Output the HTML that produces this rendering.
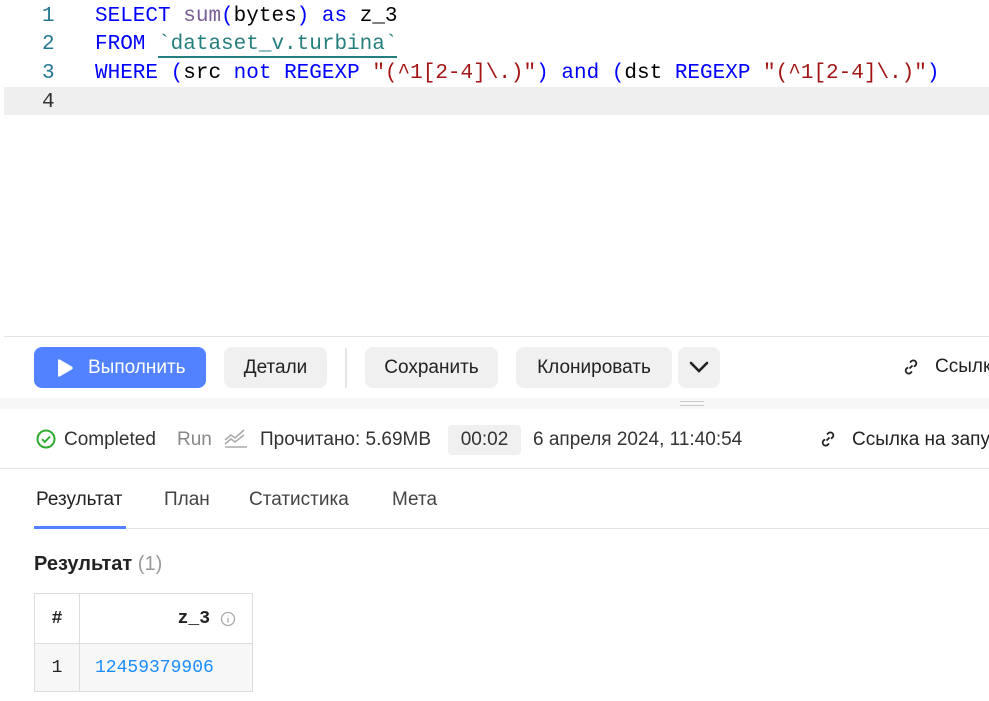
<!DOCTYPE html>
<html><head><meta charset="utf-8"><style>
*{margin:0;padding:0;box-sizing:border-box}
body{width:989px;height:701px;overflow:hidden;background:#fff;font-family:"Liberation Sans",sans-serif;position:relative;color:#222}
.code{position:absolute;left:0;top:0;width:989px;font-family:"Liberation Mono",monospace;font-size:21px}
.ln{position:absolute;height:28px;left:4px;width:985px;line-height:28px}
.ln .n{position:absolute;left:38px;top:2px;color:#237893}
.ln .t{position:absolute;left:91px;top:2px;white-space:pre;color:#000}
.k{color:#0000ff}.f{color:#795e96}.s{color:#a31515}.tb{color:#267f7f;border-bottom:2px solid #267f7f}
.abs{position:absolute;white-space:nowrap}
.btn{position:absolute;top:347px;height:41px;border-radius:8px;background:#f0f0f0;font-size:19px;line-height:41px;text-align:center;color:#222}
.status{position:absolute;top:429px;font-size:19px;line-height:22px;color:#333;white-space:nowrap}
.tab{position:absolute;top:489px;font-size:19px;color:#444}
td{border:1px solid #ddd;font-family:"Liberation Mono",monospace;font-size:18px}
</style></head><body>
<div class="code">
<div class="ln" style="top:1px"><span class="n">1</span><span class="t"><span class="k">SELECT</span> <span class="f">sum</span><span class="k">(</span>bytes<span class="k">)</span> <span class="k">as</span> z_3</span></div>
<div class="ln" style="top:29px"><span class="n">2</span><span class="t"><span class="k">FROM</span> <span class="tb">`dataset_v.turbina`</span></span></div>
<div class="ln" style="top:58px"><span class="n">3</span><span class="t"><span class="k">WHERE</span> <span class="k">(</span>src <span class="k">not</span> <span class="k">REGEXP</span> <span class="s">"(^1[2-4]\.)"</span><span class="k">)</span> <span class="k">and</span> <span class="k">(</span>dst <span class="k">REGEXP</span> <span class="s">"(^1[2-4]\.)"</span><span class="k">)</span></span></div>
<div class="ln" style="top:87px;background:#efefef"><span class="n" style="color:#333">4</span></div>
</div>
<div class="abs" style="left:4px;top:336px;width:985px;height:1px;background:#e5e5e5"></div>
<div class="btn" style="left:34px;width:172px;background:#5282ff;color:#fff"><svg class="abs" style="left:22px;top:11px" width="18" height="20" viewBox="0 0 18 20"><path d="M2 2.5Q2 0.5 4 1.6L16 8.6Q17.5 10 16 11.4L4 18.4Q2 19.5 2 17.5Z" fill="#fff"/></svg><span style="position:absolute;left:54px">Выполнить</span></div>
<div class="btn" style="left:224px;width:103px">Детали</div>
<div class="abs" style="left:345px;top:348px;width:2px;height:40px;background:#e5e5e5"></div>
<div class="btn" style="left:365px;width:133px">Сохранить</div>
<div class="btn" style="left:516px;width:156px">Клонировать</div>
<div class="btn" style="left:678px;width:42px"><svg class="abs" style="left:11px;top:14px" width="20" height="12" viewBox="0 0 20 12"><path d="M2 2L10 10L18 2" stroke="#222" stroke-width="2.6" fill="none" stroke-linecap="round"/></svg></div>
<svg class="abs" style="left:902px;top:358px" width="18" height="18" viewBox="0 0 18 18" fill="none" stroke="#222" stroke-width="1.8"><path d="M7.5 10.5l3-3M8 4.5l1.5-1.5a3 3 0 0 1 4.2 4.2L12 8.7M10 13.5l-1.5 1.5a3 3 0 0 1-4.2-4.2L6 9.3"/></svg>
<div class="abs" style="left:935px;top:356px;font-size:19px">Ссылк</div>
<div class="abs" style="left:0;top:398px;width:989px;height:11px;background:#f7f7f7"></div>
<div class="abs" style="left:680px;top:401px;width:24px;height:1px;background:#ccc"></div>
<div class="abs" style="left:680px;top:405px;width:24px;height:1px;background:#ccc"></div>
<svg class="abs" style="left:36px;top:429px" width="20" height="20" viewBox="0 0 20 20" fill="none" stroke="#30aa30" stroke-width="2"><circle cx="10" cy="10" r="8.5"/><path d="M6 10.2l2.8 2.8L14 7.5"/></svg>
<div class="status" style="left:64px">Completed</div>
<div class="status" style="left:177px;color:#888">Run</div>
<svg class="abs" style="left:224px;top:428px" width="24" height="20" viewBox="0 0 24 20" fill="none" stroke="#aaa" stroke-width="1.6"><path d="M1 12l6-5 4 3 9-8M1 16l6-5 4 3 9-7M1 19h22"/></svg>
<div class="status" style="left:260px">Прочитано: 5.69MB</div>
<div class="abs" style="left:448px;top:425px;width:73px;height:30px;background:#f0f0f0;border-radius:4px;font-size:19px;line-height:30px;text-align:center;color:#333">00:02</div>
<div class="status" style="left:533px">6 апреля 2024, 11:40:54</div>
<svg class="abs" style="left:819px;top:430px" width="18" height="18" viewBox="0 0 18 18" fill="none" stroke="#222" stroke-width="1.8"><path d="M7.5 10.5l3-3M8 4.5l1.5-1.5a3 3 0 0 1 4.2 4.2L12 8.7M10 13.5l-1.5 1.5a3 3 0 0 1-4.2-4.2L6 9.3"/></svg>
<div class="status" style="left:852px;color:#222">Ссылка на запу</div>
<div class="abs" style="left:0;top:468px;width:989px;height:1px;background:#e5e5e5"></div>
<div class="tab" style="left:36px;color:#222">Результат</div>
<div class="tab" style="left:164px">План</div>
<div class="tab" style="left:249px">Статистика</div>
<div class="tab" style="left:392px">Мета</div>
<div class="abs" style="left:34px;top:528px;width:955px;height:1px;background:#e5e5e5"></div>
<div class="abs" style="left:34px;top:526px;width:92px;height:3px;background:#5282ff"></div>
<div class="abs" style="left:34px;top:553px;font-size:20px;font-weight:bold;color:#222">Результат <span style="font-weight:normal;color:#999">(1)</span></div>
<table class="abs" style="left:34px;top:593px;border-collapse:collapse">
<tr style="height:50px"><td style="width:45px;text-align:center;font-weight:bold">#</td><td style="width:173px;text-align:right;padding-right:42px;font-weight:bold;position:relative">z_3<svg style="position:absolute;right:16px;top:17px" width="16" height="16" viewBox="0 0 16 16" fill="none" stroke="#aaa" stroke-width="1.3"><circle cx="8" cy="8" r="6.5"/><path d="M8 7v4.5M8 4.5v.8"/></svg></td></tr>
<tr style="height:48px;background:#f7f7f7"><td style="text-align:center">1</td><td style="padding-left:15px;color:#1a8cff">12459379906</td></tr>
</table>
</body></html>
